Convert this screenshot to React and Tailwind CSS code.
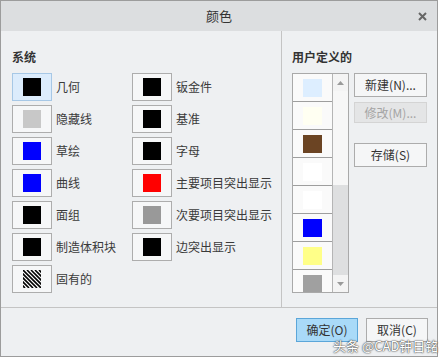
import React from "react";

const sysLeft = [
  { label: "几何", color: "#000000", selected: true },
  { label: "隐藏线", color: "#c8c8c8" },
  { label: "草绘", color: "#0000ff" },
  { label: "曲线", color: "#0000ff" },
  { label: "面组", color: "#000000" },
  { label: "制造体积块", color: "#000000" },
  { label: "固有的", hatch: true },
];

const sysRight = [
  { label: "钣金件", color: "#000000" },
  { label: "基准", color: "#000000" },
  { label: "字母", color: "#000000" },
  { label: "主要项目突出显示", color: "#ff0000" },
  { label: "次要项目突出显示", color: "#999999" },
  { label: "边突出显示", color: "#000000" },
];

const userColors = ["#ddeeff", "#fffff2", "#6b4423", "#ffffff", "#ffffff", "#0000ff", "#ffff88", "#a0a0a0"];

const Swatch = ({ item }) => (
  <div className="flex items-center h-[28px]">
    <div
      className={
        "w-[40px] h-[28px] flex items-center justify-center border " +
        (item.selected ? "bg-[#dcecfc] border-[#a7c8e6]" : "bg-[#f6f7f8] border-[#adadad]")
      }
    >
      {item.hatch ? (
        <svg width="18" height="18" viewBox="0 0 18 18">
          <rect width="18" height="18" fill="#ffffff" />
          {[-16, -12, -8, -4, 0, 4, 8, 12, 16].map((o) => (
            <line key={o} x1={o} y1="0" x2={o + 18} y2="18" stroke="#000" strokeWidth="1.6" />
          ))}
        </svg>
      ) : (
        <div className="w-[18px] h-[18px]" style={{ backgroundColor: item.color }} />
      )}
    </div>
    <span className="ml-[4px] text-[12px] text-[#3a3a3a] leading-none">{item.label}</span>
  </div>
);

const App = () => {
  return (
    <div
      className="w-[439px] h-[357px] bg-white overflow-hidden"
      style={{ fontFamily: '"Noto Sans CJK SC", "Noto Sans", sans-serif' }}
    >
      <div className="relative w-[438px] h-[357px] border border-[#9c9c9c] flex flex-col bg-[#eef0f2]">
        <div className="h-[30px] bg-[#dcdee0] flex items-center justify-center relative shrink-0">
          <span className="text-[13px] text-[#333]">颜色</span>
          <svg className="absolute right-[10px] top-[11px]" width="9" height="9" viewBox="0 0 9 9">
            <path d="M1 1 L8 8 M8 1 L1 8" stroke="#666" strokeWidth="2" />
          </svg>
        </div>

        <div className="flex h-[277px] border-b border-[#c4c4c4]">
          <div className="w-[281px] border-r border-[#c4c4c4] pl-[11px] pt-[16px]">
            <div className="text-[12px] font-semibold text-[#333] leading-[20px] mb-[6px]">系统</div>
            <div className="flex">
              <div className="w-[120px] flex flex-col gap-[4px]">
                {sysLeft.map((it) => (
                  <Swatch key={it.label} item={it} />
                ))}
              </div>
              <div className="flex flex-col gap-[4px]">
                {sysRight.map((it) => (
                  <Swatch key={it.label} item={it} />
                ))}
              </div>
            </div>
          </div>

          <div className="flex-1 pl-[10px] pt-[16px]">
            <div className="text-[12px] font-semibold text-[#333] leading-[20px] mb-[6px]">用户定义的</div>
            <div className="flex">
              <div className="flex h-[220px] border border-[#a9a9a9] overflow-hidden">
                <div className="w-[39px] bg-[#fafafa] flex flex-col">
                  {userColors.map((c, i) => (
                    <div
                      key={i}
                      className="h-[28px] shrink-0 flex items-center justify-center border-b border-[#9e9e9e]"
                    >
                      <div className="w-[19px] h-[18px]" style={{ backgroundColor: c }} />
                    </div>
                  ))}
                </div>
                <div className="w-[16px] border-l border-[#b5b5b5] flex flex-col bg-[#dedfe0]">
                  <div className="h-[17px] bg-[#f4f4f4] flex items-center justify-center">
                    <svg width="7" height="4" viewBox="0 0 7 4">
                      <path d="M0 4 L3.5 0 L7 4 Z" fill="#9a9a9a" />
                    </svg>
                  </div>
                  <div className="h-[94px] bg-[#f7f7f7]" />
                  <div className="flex-1" />
                  <div className="h-[17px] bg-[#f4f4f4] flex items-center justify-center">
                    <svg width="7" height="4" viewBox="0 0 7 4">
                      <path d="M0 0 L3.5 4 L7 0 Z" fill="#9a9a9a" />
                    </svg>
                  </div>
                </div>
              </div>
              <div className="ml-[5px] flex flex-col">
                <button className="w-[73px] h-[24px] border border-[#acacac] bg-[#f5f6f7] text-[12px] text-[#333] leading-none">
                  新建(N)...
                </button>
                <button className="mt-[5px] w-[73px] h-[21px] border border-[#d4d4d4] bg-[#e4e5e6] text-[12px] text-[#a4a4a4] leading-none">
                  修改(M)...
                </button>
                <button className="mt-[20px] w-[73px] h-[24px] border border-[#acacac] bg-[#f5f6f7] text-[12px] text-[#333] leading-none">
                  存储(S)
                </button>
              </div>
            </div>
          </div>
        </div>

        <div className="flex-1 flex justify-end items-start pt-[10px] pr-[9px] gap-[8px]">
          <button className="w-[62px] h-[24px] border border-[#5ba6d9] bg-[#a9daf8] text-[12px] text-[#333] leading-none">
            确定(O)
          </button>
          <button className="w-[62px] h-[24px] border border-[#acacac] bg-[#f5f6f7] text-[12px] text-[#333] leading-none">
            取消(C)
          </button>
        </div>

        <div
          className="absolute left-[332px] top-[338px] text-[13px] text-white leading-none whitespace-nowrap"
          style={{ textShadow: "0 0 2px #333, 0 0 1px #333" }}
        >
          头条 @CAD钟日铭
        </div>
      </div>
    </div>
  );
};

export default App;
